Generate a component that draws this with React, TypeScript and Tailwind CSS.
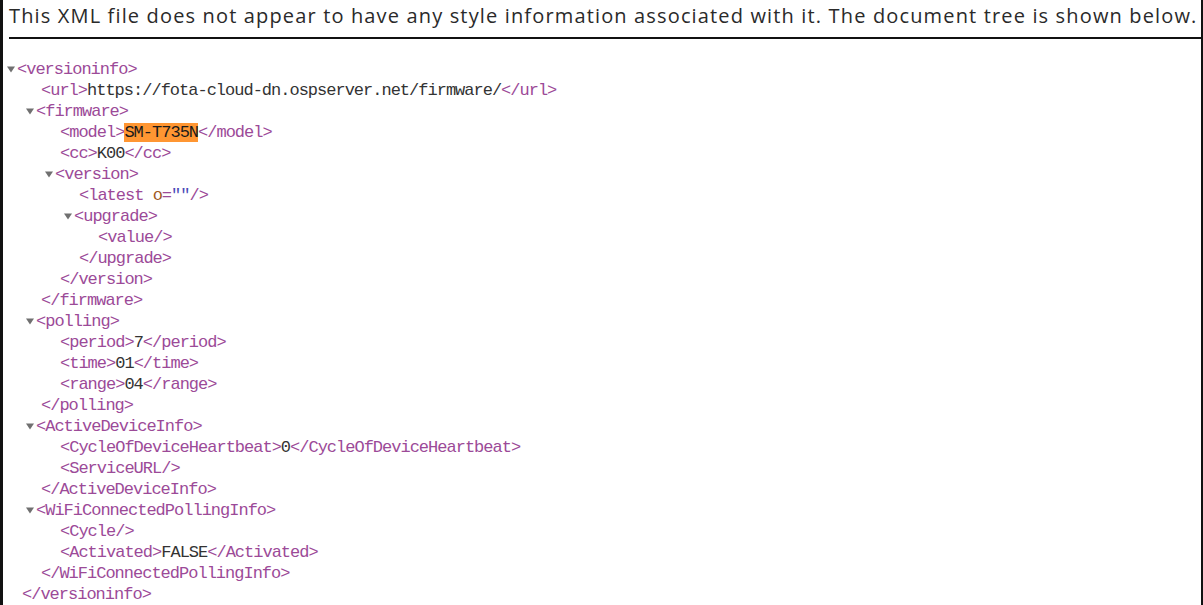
import type { ReactNode } from "react";

type XNode = {
  tag: string;
  attrs?: [string, string][];
  text?: string;
  mark?: boolean;
  children?: XNode[];
};

const tree: XNode = {
  tag: "versioninfo",
  children: [
    { tag: "url", text: "https://fota-cloud-dn.ospserver.net/firmware/" },
    {
      tag: "firmware",
      children: [
        { tag: "model", text: "SM-T735N", mark: true },
        { tag: "cc", text: "K00" },
        {
          tag: "version",
          children: [
            { tag: "latest", attrs: [["o", ""]] },
            { tag: "upgrade", children: [{ tag: "value" }] },
          ],
        },
      ],
    },
    {
      tag: "polling",
      children: [
        { tag: "period", text: "7" },
        { tag: "time", text: "01" },
        { tag: "range", text: "04" },
      ],
    },
    {
      tag: "ActiveDeviceInfo",
      children: [
        { tag: "CycleOfDeviceHeartbeat", text: "0" },
        { tag: "ServiceURL" },
      ],
    },
    {
      tag: "WiFiConnectedPollingInfo",
      children: [
        { tag: "Cycle" },
        { tag: "Activated", text: "FALSE" },
      ],
    },
  ],
};

function Tag({ children }: { children: ReactNode }) {
  return <span className="text-[#9c4a98]">{children}</span>;
}

function Arrow() {
  return (
    <span className="flex w-[10px] shrink-0 items-center">
      <svg width="8" height="7" viewBox="0 0 8 7">
        <path d="M0 0.5 L8 0.5 L4 6.5 Z" fill="#707070" />
      </svg>
    </span>
  );
}

function Node({ node }: { node: XNode }) {
  const attrs = node.attrs?.map(([k, v]) => (
    <span key={k}>
      {" "}
      <span className="text-[#a0591e]">{k}</span>
      <Tag>=</Tag>
      <span className="text-[#4a4ab8]">"{v}"</span>
    </span>
  ));

  if (node.children) {
    return (
      <div>
        <div className="-ml-[15px] flex h-[21px] items-center">
          <Arrow />
          <span>
            <Tag>&lt;{node.tag}</Tag>
            {attrs}
            <Tag>&gt;</Tag>
          </span>
        </div>
        <div className="pl-[19px]">
          {node.children.map((c, i) => (
            <Node key={i} node={c} />
          ))}
        </div>
        <div className="flex h-[21px] items-center">
          <Tag>&lt;/{node.tag}&gt;</Tag>
        </div>
      </div>
    );
  }

  if (node.text === undefined) {
    return (
      <div className="flex h-[21px] items-center">
        <span>
          <Tag>&lt;{node.tag}</Tag>
          {attrs}
          <Tag>/&gt;</Tag>
        </span>
      </div>
    );
  }

  return (
    <div className="flex h-[21px] items-center">
      <span>
        <Tag>&lt;{node.tag}&gt;</Tag>
        {node.mark ? (
          <span className="bg-[#ff9632] text-[#1a1a1a]">{node.text}</span>
        ) : (
          <span className="text-[#333]">{node.text}</span>
        )}
        <Tag>&lt;/{node.tag}&gt;</Tag>
      </span>
    </div>
  );
}

export default function App() {
  return (
    <div className="flex h-[605px] w-[1203px] flex-col overflow-hidden border-r-2 border-l-[3px] border-[#111] bg-white">
      <div className="ml-[6px] border-b-2 border-[#111] pt-[2px] pb-[7px] font-['Open_Sans',sans-serif] text-[20px] leading-[28px] tracking-[1.15px] whitespace-nowrap text-[#2a2a2a]">
        This XML file does not appear to have any style information associated with it. The document tree is shown below.
      </div>
      <div className="pt-[20px] pl-[19px] font-['Liberation_Mono',monospace] text-[17px] leading-[21px] tracking-[-1px] whitespace-pre">
        <Node node={tree} />
      </div>
    </div>
  );
}
